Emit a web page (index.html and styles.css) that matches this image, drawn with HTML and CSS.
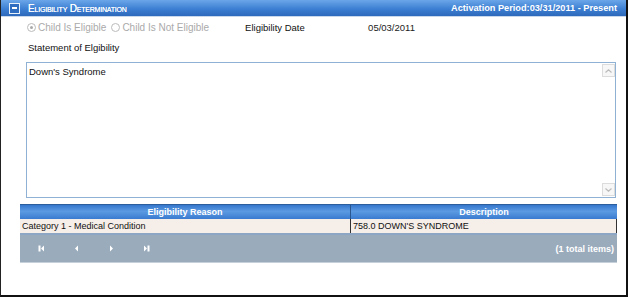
FILE: index.html
```html
<!DOCTYPE html>
<html>
<head>
  <title>Eligibility Determination</title>
  <link rel="stylesheet" href="styles.css">
</head>
<body>

<div class="panel">
  <div class="panel-head">
    <span class="toggle"></span>
    <span class="title">Eligibility Determination</span>
    <span class="period">Activation Period:03/31/2011 - Present</span>
  </div>

  <div class="panel-body">
    <div class="row-top">
      <label class="radio"><span class="dot checked"></span>Child Is Eligible</label>
      <label class="radio"><span class="dot"></span>Child Is Not Eligible</label>
      <span class="lbl">Eligibility Date</span>
      <span class="val">05/03/2011</span>
    </div>

    <div class="stmt-label">Statement of Elgibility</div>

    <div class="textarea">
      <div class="text">Down's Syndrome</div>
      <div class="scroll">
        <span class="arrow">
          <svg width="7" height="4" viewBox="0 0 7 4"><polyline points="0.5,3.5 3.5,0.8 6.5,3.5" fill="none" stroke="#bbb" stroke-width="1.2"/></svg>
        </span>
        <span class="arrow">
          <svg width="7" height="4" viewBox="0 0 7 4"><polyline points="0.5,0.5 3.5,3.2 6.5,0.5" fill="none" stroke="#bbb" stroke-width="1.2"/></svg>
        </span>
      </div>
    </div>

    <div class="grid">
      <div class="grid-head">
        <div class="c1">Eligibility Reason</div>
        <div class="c2">Description</div>
      </div>
      <div class="grid-row">
        <div class="c1">Category 1 - Medical Condition</div>
        <div class="c2">758.0 DOWN'S SYNDROME</div>
      </div>
      <div class="pager">
        <div class="nav">
          <svg width="7" height="7" viewBox="0 0 7 7"><rect x="0.5" y="0.5" width="2" height="6" fill="#fff"/><polygon points="6,0.5 6,6.5 3,3.5" fill="#fff"/></svg>
          <svg width="7" height="7" viewBox="0 0 7 7"><polygon points="5,0.5 5,6.5 2,3.5" fill="#fff"/></svg>
          <svg width="7" height="7" viewBox="0 0 7 7"><polygon points="2,0.5 2,6.5 5,3.5" fill="#fff"/></svg>
          <svg width="7" height="7" viewBox="0 0 7 7"><polygon points="1,0.5 1,6.5 4,3.5" fill="#fff"/><rect x="4.5" y="0.5" width="2" height="6" fill="#fff"/></svg>
        </div>
        <div class="total">(1 total items)</div>
      </div>
    </div>
  </div>
</div>

</body>
</html>
```

FILE: styles.css
```css
body {
  margin: 0;
  font-family: "Liberation Sans", Arial, sans-serif;
  font-size: 9.5px;
  color: #111;
  background: #fff;
}
.panel {
  width: 625px;
  height: 295px;
  border-left: 1px solid #222;
  border-right: 2px solid #111;
  border-bottom: 2px solid #111;
}
.panel-head {
  height: 16px;
  display: flex;
  align-items: center;
  background: linear-gradient(#6aa6e8, #3d7fd3 55%, #2d69bb);
  color: #fff;
  padding: 0 9px 0 8px;
  border-bottom: 1px solid #c9d8ea;
}
.toggle {
  width: 11px;
  height: 11px;
  border: 1px solid #e8f0fa;
  background: #2f6dc0;
  box-sizing: border-box;
  position: relative;
  margin-right: 8px;
}
.toggle::after {
  content: "";
  position: absolute;
  left: 2px;
  right: 2px;
  top: 3.5px;
  height: 2px;
  background: #fff;
}
.title {
  font-variant: small-caps;
  font-size: 10px;
  letter-spacing: -0.2px;
  text-shadow: 0 0 0.4px #fff;
}
.period {
  margin-left: auto;
  font-weight: bold;
  font-size: 9.2px;
}
.panel-body {
  padding: 0 10px 0 19px;
}
.row-top {
  display: flex;
  align-items: center;
  height: 20px;
  padding-left: 7px;
}
.radio {
  color: #aaa;
  font-size: 10px;
  display: flex;
  align-items: center;
  margin-right: 5px;
}
.dot {
  width: 7px;
  height: 7px;
  border: 1px solid #bbb;
  border-radius: 50%;
  margin-right: 2px;
  position: relative;
}
.dot.checked::after {
  content: "";
  position: absolute;
  left: 2px;
  top: 2px;
  width: 3px;
  height: 3px;
  border-radius: 50%;
  background: #aaa;
}
.lbl {
  margin-left: 31px;
  width: 123px;
}
.val {
  color: #222;
}
.stmt-label {
  padding-left: 8px;
  margin-top: 5px;
  height: 20px;
}
.textarea {
  margin: 0 0 0 6px;
  height: 134px;
  border: 1px solid #8eb1d4;
  display: flex;
}
.text {
  flex: 1;
  padding: 3px 2px;
}
.scroll {
  width: 13px;
  display: flex;
  flex-direction: column;
  justify-content: space-between;
  padding: 1px 0;
}
.arrow {
  height: 11px;
  width: 11px;
  border: 1px solid #dcdcdc;
  background: #f7f7f7;
  display: flex;
  align-items: center;
  justify-content: center;
}
.grid {
  margin-top: 6px;
  width: 597px;
  border-bottom: 1px solid #c5d0da;
}
.grid-head {
  display: flex;
  height: 14px;
  background: linear-gradient(#3576cc, #5c9be2 45%, #3a7bd0);
  color: #fff;
  font-weight: bold;
  font-size: 9px;
  border-top: 1px solid #2c5e9e;
}
.grid-head div {
  line-height: 14px;
  text-align: center;
}
.grid-row div {
  line-height: 14px;
}
.c1 {
  width: 330px;
}
.c2 {
  flex: 1;
  border-left: 1px solid #2a5790;
}
.grid-row {
  display: flex;
  background: #f6eee8;
  font-size: 9px;
  border-bottom: 2px solid #8ca6c4;
}
.grid-row .c1 {
  padding-left: 2px;
  width: 328px;
}
.grid-row .c2 {
  padding-left: 2px;
  border-left: 1px solid #333;
  border-right: 1px solid #333;
}
.pager {
  display: flex;
  align-items: center;
  height: 27px;
  background: #9aabbc;
  color: #fff;
  font-weight: bold;
  font-size: 9px;
}
.nav {
  display: flex;
  gap: 28px;
  padding-left: 18px;
}
.total {
  margin-left: auto;
  padding-right: 3px;
}
```
